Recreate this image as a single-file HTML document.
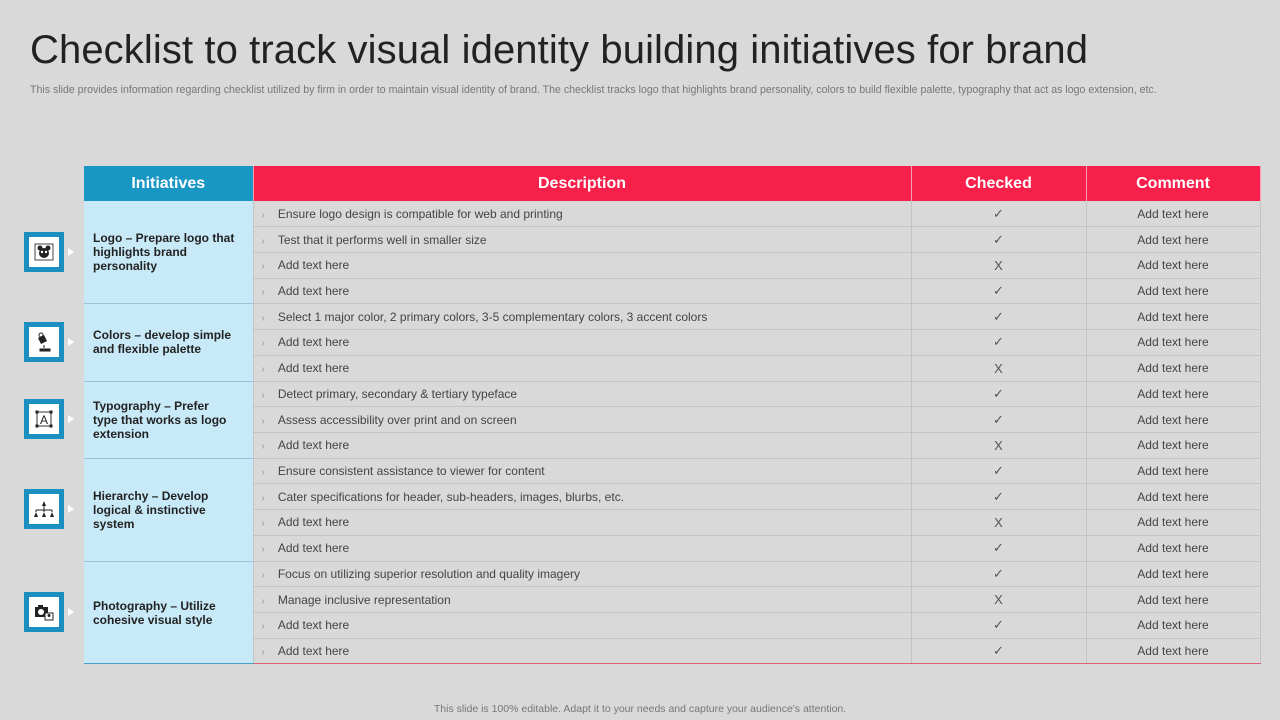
<!DOCTYPE html>
<html><head><meta charset="utf-8"><style>
*{margin:0;padding:0;box-sizing:border-box}
body{width:1280px;height:720px;background:#d9d9d9;font-family:"Liberation Sans",Arial,sans-serif;position:relative;overflow:hidden}
h1{position:absolute;left:30px;top:28px;font-size:40px;font-weight:normal;color:#222;letter-spacing:0.1px;white-space:nowrap}
.sub{position:absolute;left:30px;top:84px;font-size:10.6px;color:#777;white-space:nowrap}
.foot{position:absolute;left:0;width:1280px;top:703px;text-align:center;font-size:10.5px;color:#777}
table{position:absolute;left:84px;top:166px;border-collapse:collapse;table-layout:fixed;width:1176px}
th{height:35px;color:#fff;font-size:16px;font-weight:bold;background:#f7204a;border-right:1px solid #f9a0b0}
th.b{background:#1897c4}
td{height:25.72px;font-size:12px;color:#444;border-bottom:1px solid #c4c4c4;border-right:1px solid #c4c4c4;white-space:nowrap}
td.i{background:#c8eaf8;font-weight:bold;color:#222;font-size:12px;padding:0 16px 0 9px;white-space:normal;line-height:14px;border-bottom:1px solid #9cc2d4;vertical-align:middle}
td.d{padding-left:8px}
td.d span{color:#999;font-size:10px;margin-right:13px}
td.c{text-align:center;font-size:13px;color:#555}
td.m{text-align:center}
tr.last td{border-bottom:1px solid #e0607a}
tr.last td.i{border-bottom:1px solid #4aa0c4}
.ic{position:absolute;left:24px;width:40px;height:40px;border:5px solid #1b8fbf;background:#fff;display:flex;align-items:center;justify-content:center}
.ic:after{content:"";position:absolute;right:-15px;top:11px;border-left:6px solid #fff;border-top:4px solid transparent;border-bottom:4px solid transparent}
</style></head><body>
<h1>Checklist to track visual identity building initiatives for brand</h1>
<div class="sub">This slide provides information regarding checklist utilized by firm in order to maintain visual identity of brand. The checklist tracks logo that highlights brand personality, colors to build flexible palette, typography that act as logo extension, etc.</div>
<div class="ic" style="top:232px"><svg width="20" height="18" viewBox="0 0 20 18"><rect x="1" y="1" width="18" height="16" fill="none" stroke="#444" stroke-width="1"/><circle cx="10" cy="10" r="5" fill="#222"/><circle cx="6" cy="5" r="2.5" fill="#222"/><circle cx="14" cy="5" r="2.5" fill="#222"/><circle cx="8" cy="9" r="1.2" fill="#fff"/><circle cx="12" cy="9" r="1.2" fill="#fff"/></svg></div>
<div class="ic" style="top:322px"><svg width="18" height="20" viewBox="0 0 18 20"><path d="M3 6 L9 3 L12 9 L6 12 Z" fill="#222"/><circle cx="6" cy="3" r="2" fill="none" stroke="#222"/><path d="M9 13 v3 M5 17 h10 v2 h-10z" stroke="#222" fill="#222"/></svg></div>
<div class="ic" style="top:399px"><svg width="20" height="20" viewBox="0 0 20 20"><rect x="3" y="3" width="14" height="14" fill="none" stroke="#333"/><text x="10" y="15" font-size="12" text-anchor="middle" font-family="Liberation Sans" fill="#222">A</text><rect x="1.5" y="1.5" width="3" height="3" fill="#222"/><rect x="15.5" y="1.5" width="3" height="3" fill="#222"/><rect x="1.5" y="15.5" width="3" height="3" fill="#222"/><rect x="15.5" y="15.5" width="3" height="3" fill="#222"/></svg></div>
<div class="ic" style="top:489px"><svg width="22" height="18" viewBox="0 0 22 18"><path d="M11 1 L13 6 H9Z M3 12 L5 17 H1Z M11 12 L13 17 H9Z M19 12 L21 17 H17Z" fill="#222"/><path d="M11 6 V10 M3 10 H19 M3 10 V12 M11 10 V12 M19 10 V12" stroke="#222" fill="none"/></svg></div>
<div class="ic" style="top:592px"><svg width="20" height="18" viewBox="0 0 20 18"><rect x="1" y="4" width="13" height="10" fill="#222"/><rect x="4" y="2" width="5" height="3" fill="#222"/><circle cx="7" cy="9" r="3" fill="#fff"/><rect x="11" y="10" width="8" height="7" fill="#fff" stroke="#222"/><circle cx="15" cy="12.5" r="1.5" fill="#222"/></svg></div>
<table>
<colgroup><col style="width:169px"><col style="width:658px"><col style="width:175px"><col style="width:174px"></colgroup>
<tr><th class="b">Initiatives</th><th>Description</th><th>Checked</th><th>Comment</th></tr>
<tr><td class="i" rowspan="4">Logo – Prepare logo that highlights brand personality</td><td class="d"><span>›</span>Ensure logo design is compatible for web and printing</td><td class="c">✓</td><td class="m">Add text here</td></tr>
<tr><td class="d"><span>›</span>Test that it performs well in smaller size</td><td class="c">✓</td><td class="m">Add text here</td></tr>
<tr><td class="d"><span>›</span>Add text here</td><td class="c">X</td><td class="m">Add text here</td></tr>
<tr><td class="d"><span>›</span>Add text here</td><td class="c">✓</td><td class="m">Add text here</td></tr>
<tr><td class="i" rowspan="3">Colors – develop simple and flexible palette</td><td class="d"><span>›</span>Select 1 major color, 2 primary colors, 3-5 complementary colors, 3 accent colors</td><td class="c">✓</td><td class="m">Add text here</td></tr>
<tr><td class="d"><span>›</span>Add text here</td><td class="c">✓</td><td class="m">Add text here</td></tr>
<tr><td class="d"><span>›</span>Add text here</td><td class="c">X</td><td class="m">Add text here</td></tr>
<tr><td class="i" rowspan="3">Typography – Prefer type that works as logo extension</td><td class="d"><span>›</span>Detect primary, secondary &amp; tertiary typeface</td><td class="c">✓</td><td class="m">Add text here</td></tr>
<tr><td class="d"><span>›</span>Assess accessibility over print and on screen</td><td class="c">✓</td><td class="m">Add text here</td></tr>
<tr><td class="d"><span>›</span>Add text here</td><td class="c">X</td><td class="m">Add text here</td></tr>
<tr><td class="i" rowspan="4">Hierarchy – Develop logical &amp; instinctive system</td><td class="d"><span>›</span>Ensure consistent assistance to viewer for content</td><td class="c">✓</td><td class="m">Add text here</td></tr>
<tr><td class="d"><span>›</span>Cater specifications for header, sub-headers, images, blurbs, etc.</td><td class="c">✓</td><td class="m">Add text here</td></tr>
<tr><td class="d"><span>›</span>Add text here</td><td class="c">X</td><td class="m">Add text here</td></tr>
<tr><td class="d"><span>›</span>Add text here</td><td class="c">✓</td><td class="m">Add text here</td></tr>
<tr><td class="i" rowspan="4" style="border-bottom:1px solid #4aa0c4">Photography – Utilize cohesive visual style</td><td class="d"><span>›</span>Focus on utilizing superior resolution and quality imagery</td><td class="c">✓</td><td class="m">Add text here</td></tr>
<tr><td class="d"><span>›</span>Manage inclusive representation</td><td class="c">X</td><td class="m">Add text here</td></tr>
<tr><td class="d"><span>›</span>Add text here</td><td class="c">✓</td><td class="m">Add text here</td></tr>
<tr class="last"><td class="d"><span>›</span>Add text here</td><td class="c">✓</td><td class="m">Add text here</td></tr>
</table>
<div class="foot">This slide is 100% editable. Adapt it to your needs and capture your audience's attention.</div>
</body></html>
